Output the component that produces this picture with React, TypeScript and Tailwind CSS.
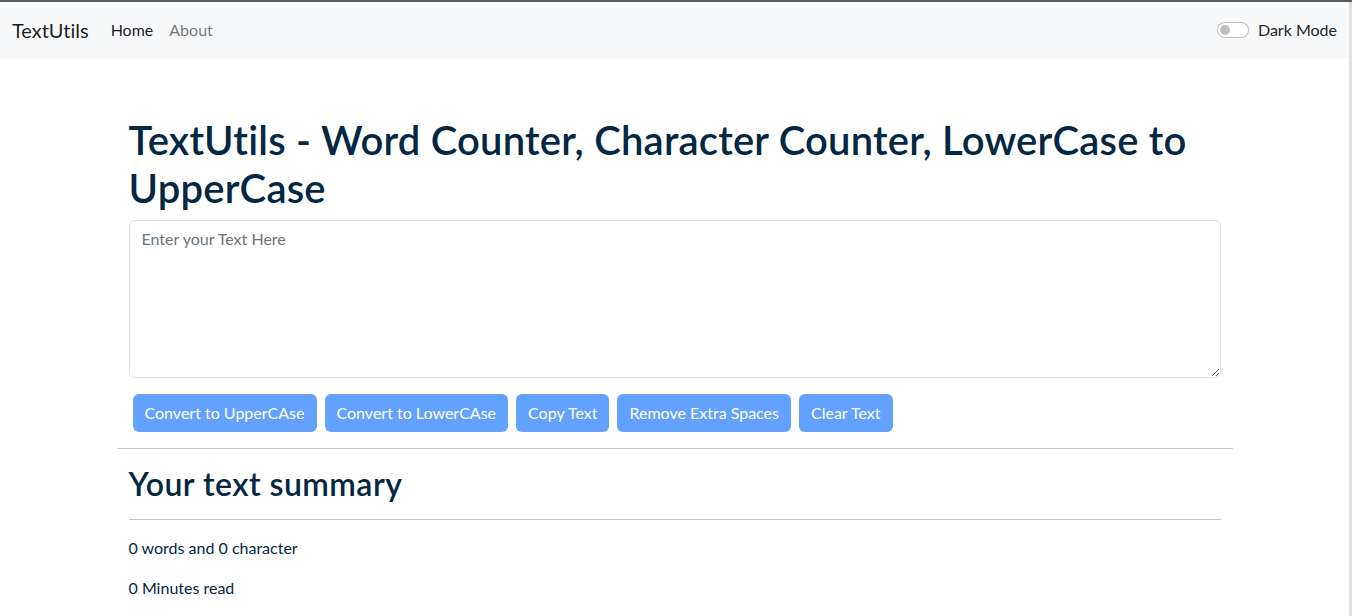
export default function App() {
  const buttons = [
    "Convert to UpperCAse",
    "Convert to LowerCAse",
    "Copy Text",
    "Remove Extra Spaces",
    "Clear Text",
  ];

  return (
    <div className="min-h-screen bg-white flex flex-col font-['Segoe_UI','Lato',sans-serif] [font-variant-ligatures:none] text-[#212529]">
      <div className="h-[2px] bg-[#5c5c5c]" />
      <div className="flex flex-1">
        <div className="flex-1">
          {/* navbar */}
          <nav className="h-[56px] bg-[#f8f9fa] flex items-center justify-between px-3">
            <div className="flex items-center">
              <span className="text-[20px] text-black/90 mr-[14px]">TextUtils</span>
              <a className="px-2 text-[16px] text-black/90">Home</a>
              <a className="px-2 text-[16px] text-black/55">About</a>
            </div>
            <div className="flex items-center">
              <div className="w-[32px] h-[16px] rounded-full border border-black/25 bg-white flex items-center px-[2px] mr-[9px]">
                <div className="w-[10px] h-[10px] rounded-full bg-[#bfbfbf]" />
              </div>
              <span className="text-[16px]">Dark Mode</span>
            </div>
          </nav>

          {/* alert placeholder */}
          <div className="h-[50px]" />

          <div className="mx-auto max-w-[1140px] px-3 mt-2 text-[#042743]">
            <div className="px-3">
              <h1 className="text-[40px] leading-[48px] font-semibold tracking-[0.2px] mb-2">
                TextUtils - Word Counter, Character Counter, LowerCase to UpperCase
              </h1>
              <textarea
                className="block w-full h-[158px] border border-[#dee2e6] rounded-md px-3 py-1.5 text-[16px] leading-6 mb-4 placeholder:text-[#6c757d] outline-none"
                placeholder="Enter your Text Here"
              />
              <div className="flex gap-2 ml-1">
                {buttons.map((b) => (
                  <button
                    key={b}
                    className="h-[38px] px-3 rounded-md bg-[#62a1fe] text-white text-[16px]"
                  >
                    {b}
                  </button>
                ))}
              </div>
            </div>
            <hr className="mt-4 border-t border-[#042743]/25" />
            <div className="px-3">
              <h2 className="mt-4 text-[32px] leading-[38px] font-semibold tracking-[0.45px]">Your text summary</h2>
              <hr className="my-4 border-t border-[#042743]/25" />
              <p className="text-[16px] leading-6 mb-4">0 words and 0 character</p>
              <p className="text-[16px] leading-6 mb-4">0 Minutes read</p>
            </div>
          </div>
        </div>
        <div className="w-[3px] bg-[#e1e1e1]" />
      </div>
    </div>
  );
}
